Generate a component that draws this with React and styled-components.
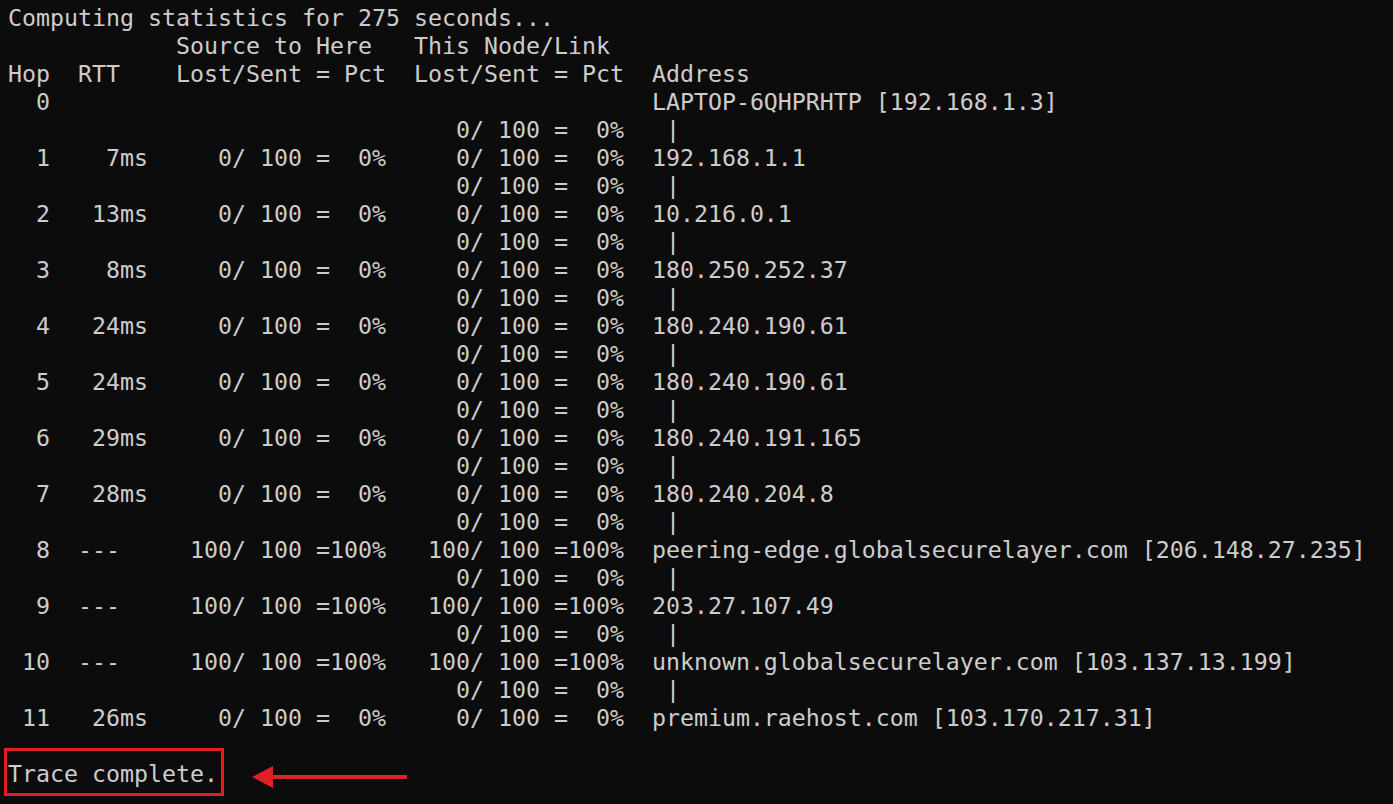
import React from 'react';
import styled, { createGlobalStyle } from 'styled-components';

const Global = createGlobalStyle`
  html, body {
    margin: 0;
    padding: 0;
    background: #0c0c0c;
    overflow: hidden;
  }
`

const Terminal = styled.div`
  width: 1393px;
  height: 804px;
  box-sizing: border-box;
  padding: 4px 0 0 8px;
  background: #0c0c0c;
  color: #cccccc;
  font-family: "DejaVu Sans Mono", "Liberation Mono", monospace;
  font-size: 23.25px;
  line-height: 28px;
`

const Output = styled.pre`
  margin: 0;
  font: inherit;
  white-space: pre;
`

const TraceRow = styled.div`
  display: flex;
  align-items: flex-start;
  margin-top: 16px;
  margin-left: -4px;
`

const Highlight = styled.span`
  display: inline-block;
  border: 3px solid #e31e24;
  padding: 9px 3px 5px 1px;
  white-space: pre;
`

const Arrow = styled.svg`
  display: block;
  margin: 17px 0 0 28px;
`

const hops = [
  ['1', '7ms', 0, 'ok', '192.168.1.1'],
  ['2', '13ms', 0, 'ok', '10.216.0.1'],
  ['3', '8ms', 0, 'ok', '180.250.252.37'],
  ['4', '24ms', 0, 'ok', '180.240.190.61'],
  ['5', '24ms', 0, 'ok', '180.240.190.61'],
  ['6', '29ms', 0, 'ok', '180.240.191.165'],
  ['7', '28ms', 0, 'ok', '180.240.204.8'],
  ['8', '---', 100, 'lost', 'peering-edge.globalsecurelayer.com [206.148.27.235]'],
  ['9', '---', 100, 'lost', '203.27.107.49'],
  ['10', '---', 100, 'lost', 'unknown.globalsecurelayer.com [103.137.13.199]'],
  ['11', '26ms', 0, 'ok', 'premium.raehost.com [103.170.217.31]'],
]

const stat = lost => `${String(lost).padStart(3)}/ 100 =${String(lost).padStart(3)}%`
const link = ' '.repeat(30) + stat(0) + '   |'

const buildLines = () => {
  const lines = [
    'Computing statistics for 275 seconds...',
    '            Source to Here   This Node/Link',
    'Hop  RTT    Lost/Sent = Pct  Lost/Sent = Pct  Address',
    '  0'.padEnd(46) + 'LAPTOP-6QHPRHTP [192.168.1.3]',
  ]
  hops.forEach(([hop, rtt, lost, , addr]) => {
    lines.push(link)
    const rttCol = rtt === '---' ? '  ---' : rtt.padStart(7)
    const head = (hop.padStart(3) + rttCol).padEnd(13)
    lines.push(head + stat(lost) + '   ' + stat(lost) + '  ' + addr)
  })
  return lines.join('\n')
}

const App = () => (
  <>
    <Global />
    <Terminal>
      <Output>{buildLines()}</Output>
      <TraceRow>
        <Highlight>Trace complete.</Highlight>
        <Arrow width="156" height="24" viewBox="0 0 156 24">
          <polygon points="0,12 21,1 21,23" fill="#e31e24" />
          <rect x="19" y="10" width="136" height="4" fill="#e31e24" />
        </Arrow>
      </TraceRow>
    </Terminal>
  </>
)

export default App;
